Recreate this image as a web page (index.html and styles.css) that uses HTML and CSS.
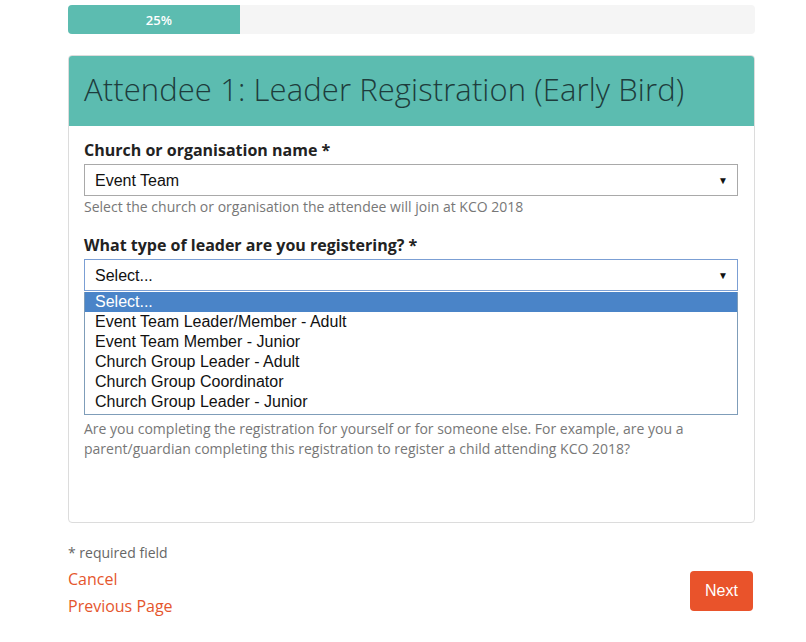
FILE: index.html
```html
<!DOCTYPE html>
<html>
<head>
<meta charset="utf-8">
<link rel="stylesheet" href="styles.css">
</head>
<body>
<div class="page">
  <div class="progress"><div class="progress-bar" style="width:25%">25%</div></div>

  <div class="panel">
    <div class="panel-head"><h1>Attendee 1: Leader Registration (Early Bird)</h1></div>
    <div class="panel-body">
      <div class="field">
        <div class="label">Church or organisation name *</div>
        <div class="select"><span>Event Team</span><span class="arrow">&#9660;</span></div>
        <div class="help">Select the church or organisation the attendee will join at KCO 2018</div>
      </div>
      <div class="field second">
        <div class="label">What type of leader are you registering? *</div>
        <div class="select focus"><span>Select...</span><span class="arrow">&#9660;</span></div>
        <div class="list">
          <div class="opt active">Select...</div>
          <div class="opt">Event Team Leader/Member - Adult</div>
          <div class="opt">Event Team Member - Junior</div>
          <div class="opt">Church Group Leader - Adult</div>
          <div class="opt">Church Group Coordinator</div>
          <div class="opt">Church Group Leader - Junior</div>
        </div>
        <div class="help help2">Are you completing the registration for yourself or for someone else. For example, are you a parent/guardian completing this registration to register a child attending KCO 2018?</div>
      </div>
    </div>
  </div>

  <div class="footer">
    <div class="footer-left">
      <div class="req">* required field</div>
      <a class="link">Cancel</a>
      <a class="link">Previous Page</a>
    </div>
    <button class="next">Next</button>
  </div>
</div>
</body>
</html>
```

FILE: styles.css
```css
* { box-sizing: border-box; }
body {
  margin: 0;
  background: #fff;
  font-family: "Open Sans", "Liberation Sans", sans-serif;
  color: #333;
}
.page {
  width: 687px;
  margin-left: 68px;
  padding-top: 5px;
}
.progress {
  height: 29px;
  background: #f5f5f5;
  border-radius: 4px;
  overflow: hidden;
  display: flex;
}
.progress-bar {
  background: #5cbcb0;
  color: #fff;
  font-size: 13px;
  font-weight: 600;
  display: flex;
  align-items: center;
  justify-content: center;
  padding-left: 10px;
}
.panel {
  margin-top: 21px;
  border: 1px solid #dcdcdc;
  border-radius: 4px;
  overflow: hidden;
}
.panel-head {
  background: #5cbcb0;
  height: 70px;
  display: flex;
  align-items: center;
  padding-left: 15px;
  padding-bottom: 4px;
}
.panel-head h1 {
  margin: 0;
  font-weight: 300;
  font-size: 31px;
  letter-spacing: 0.1px;
  color: #1e3c3c;
}
.panel-body {
  padding: 13px 16px 63px 15px;
}
.label {
  font-weight: 700;
  font-size: 16px;
  line-height: 22px;
  color: #222;
  margin-bottom: 3px;
}
.select {
  height: 32px;
  border: 1px solid #a9a9a9;
  display: flex;
  align-items: center;
  justify-content: space-between;
  padding: 1px 9px 0 10px;
  font-family: "Liberation Sans", Arial, sans-serif;
  font-size: 16px;
  color: #111;
}
.select.focus { border-color: #7b9fd4; }
.arrow { font-size: 10px; color: #111; }
.help {
  font-size: 14px;
  line-height: 20px;
  color: #777;
  margin-top: 1px;
}
.second { margin-top: 17px; }
.list {
  border: 1px solid #7f9db9;
  border-top: none;
  padding-bottom: 2px;
  font-family: "Liberation Sans", Arial, sans-serif;
  font-size: 16px;
  color: #111;
}
.opt {
  height: 20px;
  line-height: 20px;
  padding-left: 10px;
}
.opt.active {
  background: #4a84c8;
  color: #fff;
  margin-top: 1px;
}
.help2 { margin-top: 4px; }
.footer {
  display: flex;
  justify-content: space-between;
  align-items: flex-start;
  margin-top: 20px;
}
.footer-left {
  display: flex;
  flex-direction: column;
}
.req {
  font-size: 14px;
  line-height: 20px;
  color: #666;
  margin-bottom: 3px;
}
.link {
  font-size: 16px;
  line-height: 27px;
  color: #e5562d;
}
.next {
  margin-top: 28px;
  margin-right: 2px;
  width: 63px;
  height: 40px;
  border: none;
  border-radius: 4px;
  background: #e9532b;
  color: #fff;
  font-family: "Liberation Sans", Arial, sans-serif;
  font-size: 16px;
}
```
